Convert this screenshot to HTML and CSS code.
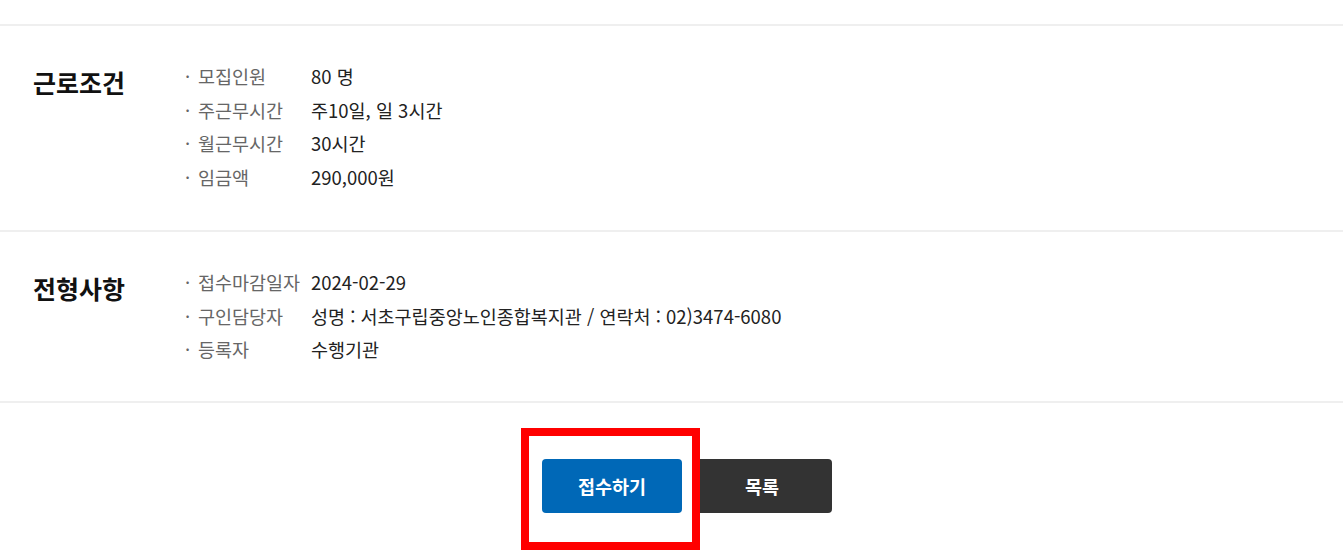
FILE: index.html
```html
<!DOCTYPE html>
<html lang="ko">
<head>
<meta charset="utf-8">
<title>근로조건</title>
<link rel="stylesheet" href="styles.css">
</head>
<body>
<div class="page">
  <section class="info">
    <h2 class="info-title">근로조건</h2>
    <dl class="info-list">
      <dt>모집인원</dt><dd>80 명</dd>
      <dt>주근무시간</dt><dd>주10일, 일 3시간</dd>
      <dt>월근무시간</dt><dd>30시간</dd>
      <dt>임금액</dt><dd>290,000원</dd>
    </dl>
  </section>
  <section class="info info-second">
    <h2 class="info-title">전형사항</h2>
    <dl class="info-list">
      <dt>접수마감일자</dt><dd>2024-02-29</dd>
      <dt>구인담당자</dt><dd>성명 : 서초구립중앙노인종합복지관 / 연락처 : 02)3474-6080</dd>
      <dt>등록자</dt><dd>수행기관</dd>
    </dl>
  </section>
  <div class="actions">
    <span class="btn-wrap">
      <a class="btn btn-primary" href="#">접수하기</a>
      <span class="highlight"></span>
    </span>
    <a class="btn btn-dark" href="#">목록</a>
  </div>
</div>
</body>
</html>
```

FILE: styles.css
```css
* { box-sizing: border-box; }
html, body {
  margin: 0;
  padding: 0;
  background: #fff;
}
body {
  font-family: "Noto Sans CJK KR", "Noto Sans", sans-serif;
  color: #222;
  overflow: hidden;
  height: 552px;
}
.page {
  padding-top: 24px;
}
.info {
  display: flex;
  border-top: 2px solid #efefef;
  padding: 34px 0 36px 33px;
}
.info-second {
  padding-bottom: 34px;
}
.info-title {
  width: 152px;
  flex: none;
  margin: 0;
  padding-top: 5px;
  font-size: 25px;
  line-height: 34px;
  font-weight: 700;
  color: #111;
  letter-spacing: 0;
}
.info-list {
  margin: 0;
  display: grid;
  grid-template-columns: 126px auto;
  font-size: 18.5px;
  line-height: 33.5px;
}
.info-list dt {
  color: #666;
  margin: 0;
  white-space: nowrap;
}
.info-list dt::before {
  content: "·";
  display: inline-block;
  width: 13px;
  color: #666;
}
.info-list dd {
  margin: 0;
  color: #222;
  white-space: nowrap;
}
.actions {
  border-top: 2px solid #efefef;
  display: flex;
  justify-content: center;
  gap: 10px;
  padding: 56px 0 0 31px;
}
.btn-wrap {
  position: relative;
  display: block;
}
.btn {
  display: flex;
  align-items: center;
  justify-content: center;
  width: 140px;
  height: 54px;
  border-radius: 4px;
  color: #fff;
  text-decoration: none;
  font-size: 18.5px;
  font-weight: 700;
}
.btn-primary {
  background: #0068b7;
}
.btn-dark {
  background: #333333;
}
.highlight {
  position: absolute;
  left: -21px;
  top: -31px;
  width: 179px;
  height: 122px;
  border: 8px solid #ff0000;
  pointer-events: none;
  z-index: 2;
}
```
